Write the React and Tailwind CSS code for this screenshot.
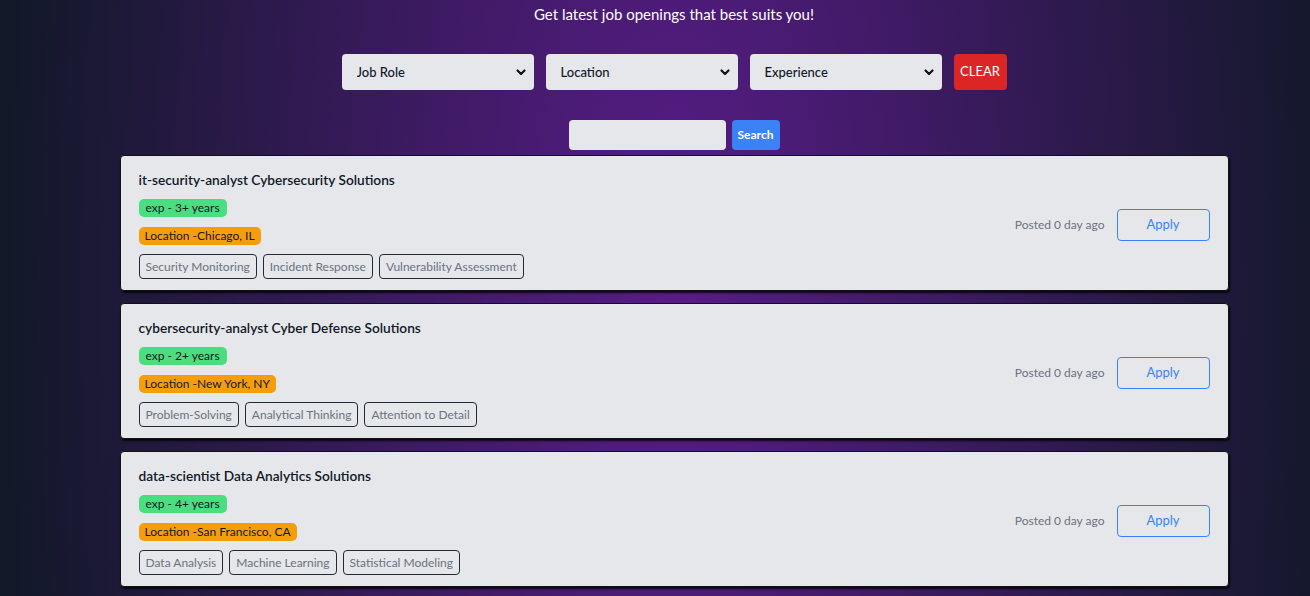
import React from "react";

const jobs = [
  {
    title: "it-security-analyst Cybersecurity Solutions",
    exp: "exp - 3+ years",
    loc: "Location -Chicago, IL",
    skills: ["Security Monitoring", "Incident Response", "Vulnerability Assessment"],
  },
  {
    title: "cybersecurity-analyst Cyber Defense Solutions",
    exp: "exp - 2+ years",
    loc: "Location -New York, NY",
    skills: ["Problem-Solving", "Analytical Thinking", "Attention to Detail"],
  },
  {
    title: "data-scientist Data Analytics Solutions",
    exp: "exp - 4+ years",
    loc: "Location -San Francisco, CA",
    skills: ["Data Analysis", "Machine Learning", "Statistical Modeling"],
  },
];

function Chevron() {
  return (
    <svg width="12" height="12" viewBox="0 0 12 12" className="pointer-events-none absolute right-[7px] top-1/2 -translate-y-1/2">
      <path d="M2.5 4.5 L6 8 L9.5 4.5" fill="none" stroke="#111" strokeWidth="2.2" strokeLinecap="round" strokeLinejoin="round" />
    </svg>
  );
}

function Select({ label }) {
  return (
    <div className="relative w-[192px] h-[36px]">
      <select className="appearance-none w-full h-full rounded-[4px] bg-[#e5e7eb] pl-[15px] pr-[24px] pt-[2px] text-[13px] font-medium text-[#111827] outline-none">
        <option>{label}</option>
      </select>
      <Chevron />
    </div>
  );
}

function Card({ job }) {
  return (
    <div className="flex items-center justify-between rounded-[4px] border border-[#111] bg-[#e5e7eb] pl-[18px] pr-[18px] pt-[14px] pb-[11px] shadow-[1px_2px_2px_rgba(0,0,0,0.8)]">
      <div className="flex flex-col items-start">
        <div className="text-[13.7px] font-semibold leading-[20px] text-[#111827]">{job.title}</div>
        <div className="mt-[9px] rounded-[5px] bg-[#4ade80] px-[7px] text-[12px] leading-[18px] text-[#111827]">{job.exp}</div>
        <div className="mt-[10px] rounded-[5px] bg-[#f59e0b] px-[6px] text-[12px] leading-[18px] text-[#111827]">{job.loc}</div>
        <div className="mt-[9px] flex gap-[6px]">
          {job.skills.map((s) => (
            <div key={s} className="rounded-[4px] border border-[#1f2937] px-[6px] text-[12px] leading-[23px] text-[#6b7280]">
              {s}
            </div>
          ))}
        </div>
      </div>
      <div className="flex items-center gap-[12px]">
        <span className="text-[12px] text-[#6b7280]">Posted 0 day ago</span>
        <button className="h-[32px] w-[93px] rounded-[4px] border border-[#3b82f6] text-[13px] text-[#3b82f6]">Apply</button>
      </div>
    </div>
  );
}

export default function App() {
  return (
    <div
      className="min-h-screen w-full bg-[radial-gradient(ellipse_52%_300%_at_51.5%_50%,#581c87_0%,#111827_100%)] pl-[38px] pb-[8px]"
      style={{ fontFamily: "Lato, 'Open Sans', sans-serif" }}
    >
      <div className="flex flex-col items-center">
        <h1 className="pt-[3px] text-[15px] leading-[22px] text-white">Get latest job openings that best suits you!</h1>
        <div className="mt-[29px] flex items-center gap-[12px]">
          <Select label="Job Role" />
          <Select label="Location" />
          <Select label="Experience" />
          <button className="h-[36px] w-[53px] rounded-[4px] bg-[#dc2626] text-[13px] text-white">CLEAR</button>
        </div>
        <div className="mt-[30px] flex items-center gap-[6px]">
          <input className="h-[30px] w-[157px] rounded-[4px] bg-[#e5e7eb] outline-none" />
          <button className="h-[30px] w-[48px] rounded-[4px] bg-[#3b82f6] text-[12px] font-bold text-white">Search</button>
        </div>
        <div className="mt-[5px] flex w-[1109px] flex-col gap-[12px]">
          {jobs.map((j) => (
            <Card key={j.title} job={j} />
          ))}
        </div>
      </div>
    </div>
  );
}
